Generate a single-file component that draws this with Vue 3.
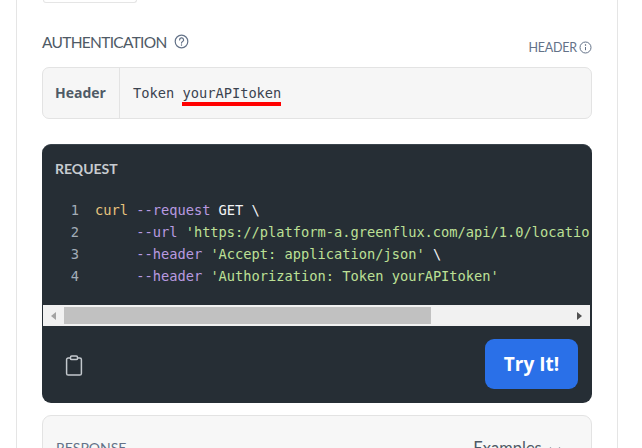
<script setup>
const lines = [
  [['y', 'curl'], ['p', ' --request'], ['w', ' GET \\']],
  [['p', '     --url'], ['g', " 'https://platform-a.greenflux.com/api/1.0/locations'"], ['w', ' \\']],
  [['p', '     --header'], ['g', " 'Accept: application/json'"], ['w', ' \\']],
  [['p', '     --header'], ['g', " 'Authorization: Token yourAPItoken'"]],
]
</script>

<template>
  <div class="page">
    <div class="panel">
      <div class="stub"></div>

      <div class="auth-head">
        <div class="auth-title">
          <span>AUTHENTICATION</span>
          <svg class="help" width="15" height="15" viewBox="0 0 15 15" fill="none" stroke="#637288" stroke-width="1.2">
            <circle cx="7.5" cy="7.5" r="6.3" />
            <path d="M5.6 5.9a2 2 0 1 1 3 1.7c-.7.4-1.1.8-1.1 1.5" stroke-linecap="round" />
            <circle cx="7.5" cy="11" r=".5" fill="#637288" stroke-width=".5" />
          </svg>
        </div>
        <div class="auth-kind">
          <span>HEADER</span>
          <svg width="13" height="13" viewBox="0 0 13 13" fill="none" stroke="#637288" stroke-width="1">
            <circle cx="6.5" cy="6.5" r="5.5" />
            <path d="M6.5 6v3.2" />
            <circle cx="6.5" cy="4" r=".4" fill="#637288" />
          </svg>
        </div>
      </div>

      <div class="auth-box">
        <div class="auth-label">Header</div>
        <div class="auth-value">Token <span class="marked">yourAPItoken</span></div>
      </div>

      <div class="request">
        <div class="req-title">REQUEST</div>
        <div class="code">
          <div v-for="(line, i) in lines" :key="i" class="line">
            <span class="num">{{ i + 1 }}</span>
            <span class="src"><span v-for="(t, j) in line" :key="j" :class="t[0]">{{ t[1] }}</span></span>
          </div>
        </div>
        <div class="scrollbar">
          <span class="arrow left"></span>
          <div class="track"><div class="thumb"></div></div>
          <span class="arrow right"></span>
        </div>
        <div class="req-foot">
          <svg width="18" height="21" viewBox="0 0 18 21" fill="none" stroke="#c3c8cd" stroke-width="1.5" stroke-linejoin="round">
            <path d="M5.5 3H3.2A1.6 1.6 0 0 0 1.6 4.6v13.8A1.6 1.6 0 0 0 3.2 20h11.6a1.6 1.6 0 0 0 1.6-1.6V4.6A1.6 1.6 0 0 0 14.8 3h-2.3" />
            <rect x="5.5" y="1" width="7" height="3.6" rx="1.2" />
          </svg>
          <button class="try">Try It!</button>
        </div>
      </div>

      <div class="response">
        <span class="res-title">RESPONSE</span>
        <span class="examples">Examples
          <svg width="12" height="8" viewBox="0 0 12 8" fill="none" stroke="#8b95a3" stroke-width="1.3"><path d="M1 1.5l5 5 5-5" /></svg>
        </span>
      </div>
    </div>
  </div>
</template>

<style>
html, body { margin: 0; background: #fff; }
</style>

<style scoped>
.page {
  width: 642px;
  height: 448px;
  overflow: hidden;
  background: #fff;
  box-sizing: border-box;
  padding: 0 24px 0 16px;
}
.panel {
  height: 520px;
  box-sizing: border-box;
  border-left: 1px solid #e5e5e5;
  border-right: 1px solid #e5e5e5;
  padding: 0 25px 0 25px;
}
.stub {
  width: 94px;
  height: 3px;
  box-sizing: border-box;
  margin-left: 1px;
  border: 1px solid #e5e5e5;
  border-top: 0;
  border-radius: 0 0 8px 8px;
}
.auth-head {
  height: 64px;
  box-sizing: border-box;
  padding-top: 29px;
  display: flex;
  justify-content: space-between;
  font-family: Lato, sans-serif;
}
.auth-title {
  display: flex;
  align-items: flex-start;
  gap: 7px;
  font-size: 15.5px;
  line-height: 20px;
  letter-spacing: -.7px;
  color: #4f5a66;
}
.help { margin-top: 2px; }
.auth-kind {
  display: flex;
  align-items: flex-start;
  gap: 2px;
  margin-top: 8px;
  font-size: 12.5px;
  line-height: 16px;
  letter-spacing: -.2px;
  color: #637288;
}
.auth-kind svg { margin-top: 1px; }
.auth-box {
  height: 52px;
  box-sizing: border-box;
  display: flex;
  background: #f6f6f6;
  border: 1px solid #e3e3e3;
  border-radius: 7px;
}
.auth-label {
  width: 77px;
  box-sizing: border-box;
  padding-left: 12px;
  border-right: 1px solid #e3e3e3;
  font: 700 14px/50px "Open Sans", sans-serif;
  color: #4f5a66;
}
.auth-value {
  padding-left: 13px;
  font: 13.7px/50px "DejaVu Sans Mono", monospace;
  color: #3b4350;
}
.marked {
  display: inline-block;
  line-height: 18px;
  border-bottom: 4px solid #f00;
  height: 18px;
}
.request {
  margin-top: 25px;
  height: 259px;
  background: #262e35;
  border-radius: 9px;
  overflow: hidden;
  border-top: 1px solid #3a444c;
  box-sizing: border-box;
}
.req-title {
  padding: 15px 0 0 13px;
  font: 700 14px/18px Lato, sans-serif;
  color: #c7cbd0;
}
.code {
  width: 548px;
  margin-top: 21px;
  height: 106px;
  overflow: hidden;
  font: 13.7px/22px "DejaVu Sans Mono", monospace;
  white-space: pre;
}
.line { display: flex; }
.num {
  width: 37px;
  text-align: right;
  color: #a3adb8;
  flex: none;
}
.src { margin-left: 16px; }
.y { color: #e8c47e; }
.p { color: #b99ae0; }
.w { color: #f2f4f5; }
.g { color: #bde095; }
.scrollbar {
  width: 547px;
  height: 21px;
  margin-left: 1px;
  background: #f1f1f1;
  display: flex;
  align-items: center;
}
.arrow {
  width: 0;
  height: 0;
  flex: none;
  border-top: 4.5px solid transparent;
  border-bottom: 4.5px solid transparent;
}
.arrow.left { margin-left: 8px; border-right: 5px solid #a3a3a3; }
.arrow.right { margin-right: 8px; border-left: 5px solid #505050; }
.track { flex: 1; padding: 0 8px; }
.thumb {
  width: 367px;
  height: 17px;
  background: #c1c1c1;
}
.req-foot {
  height: 75px;
  box-sizing: border-box;
  padding: 13px 14px 0 23px;
  display: flex;
  justify-content: space-between;
  align-items: flex-start;
}
.req-foot svg { margin-top: 16px; }
.try {
  width: 93px;
  height: 50px;
  border: 0;
  border-radius: 9px;
  background: #2a70e8;
  color: #fff;
  font: 700 19px/50px "Open Sans", sans-serif;
  padding: 0;
}
.response {
  margin-top: 12px;
  height: 80px;
  box-sizing: border-box;
  background: #f7f7f7;
  border: 1px solid #e3e3e3;
  border-radius: 9px;
  padding: 23px 30px 0 13px;
  display: flex;
  justify-content: space-between;
  font-family: Lato, sans-serif;
  color: #637288;
}
.res-title { font-size: 14px; line-height: 18px; }
.examples { font-size: 16.5px; line-height: 18px; color: #4f5a66; }
.examples svg { margin-left: 3px; }
</style>
